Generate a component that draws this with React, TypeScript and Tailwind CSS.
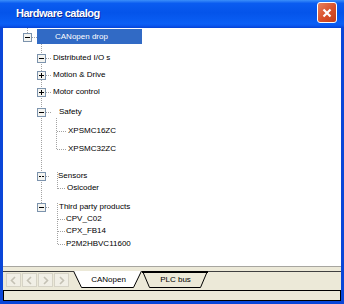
import React from 'react';

const rows = [
  { label: 'Distributed I/O s', cls: 'mt-[8px] ml-[50px]' },
  { label: 'Motion & Drive', cls: 'mt-[5px] ml-[50px]' },
  { label: 'Motor control', cls: 'mt-[5px] ml-[50px]' },
  { label: 'Safety', cls: 'mt-[8px] ml-[56px]' },
  { label: 'XPSMC16ZC', cls: 'mt-[7px] ml-[65px]' },
  { label: 'XPSMC32ZC', cls: 'mt-[6px] ml-[65px]' },
  { label: 'Sensors', cls: 'mt-[15px] ml-[55px]' },
  { label: 'Osicoder', cls: 'mt-0 ml-[64px]' },
  { label: 'Third party products', cls: 'mt-[7px] ml-[56px]' },
  { label: 'CPV_C02', cls: 'mt-0 ml-[63px]' },
  { label: 'CPX_FB14', cls: 'mt-0 ml-[63px]' },
  { label: 'P2M2HBVC11600', cls: 'mt-[1px] ml-[63px]' },
];

type BoxKind = 'minus' | 'plus' | 'dash';

function Box({ x, y, kind }: { x: number; y: number; kind: BoxKind }) {
  return (
    <g>
      <rect x={x + 0.5} y={y + 0.5} width={8} height={8} fill="#f4f4f0" stroke="#7c93ad" />
      {kind === 'dash' ? (
        <>
          <line x1={x + 2} y1={y + 4.5} x2={x + 4} y2={y + 4.5} stroke="#000" />
          <line x1={x + 5} y1={y + 4.5} x2={x + 7} y2={y + 4.5} stroke="#000" />
        </>
      ) : (
        <line x1={x + 2} y1={y + 4.5} x2={x + 7} y2={y + 4.5} stroke="#000" />
      )}
      {kind === 'plus' && <line x1={x + 4.5} y1={y + 2} x2={x + 4.5} y2={y + 7} stroke="#000" />}
    </g>
  );
}

function Connectors() {
  const dot = { stroke: '#a3a3a3', strokeWidth: 1, strokeDasharray: '1 1' };
  const h = (y: number, x1: number, x2: number) => <line x1={x1} y1={y + 0.5} x2={x2} y2={y + 0.5} {...dot} />;
  const v = (x: number, y1: number, y2: number) => <line x1={x + 0.5} y1={y1} x2={x + 0.5} y2={y2} {...dot} />;
  return (
    <svg className="absolute inset-0 pointer-events-none" width={344} height={304}>
      {v(27, 28, 33)}
      {h(37, 32, 37)}
      {v(41, 44, 204)}
      {h(58, 46, 52)}
      {h(75, 46, 52)}
      {h(92, 46, 52)}
      {h(112, 46, 51)}
      {h(176, 46, 49)}
      {h(207, 46, 50)}
      {v(56, 118, 150)}
      {h(131, 57, 67)}
      {h(149, 57, 67)}
      {v(57, 172, 189)}
      {h(188, 58, 66)}
      {v(57, 203, 245)}
      {h(219, 58, 65)}
      {h(231, 58, 65)}
      {h(244, 58, 65)}
      <Box x={23} y={33} kind="minus" />
      <Box x={37} y={54} kind="minus" />
      <Box x={37} y={71} kind="plus" />
      <Box x={37} y={88} kind="plus" />
      <Box x={37} y={108} kind="minus" />
      <Box x={37} y={172} kind="dash" />
      <Box x={37} y={203} kind="minus" />
    </svg>
  );
}

function NavButton({ dir }: { dir: 'left' | 'right' }) {
  return (
    <div className="w-[15px] h-[14px] border border-[#d6d3c6] bg-[#f1efe6] flex items-center justify-center">
      <svg width="7" height="9" viewBox="0 0 7 9">
        {dir === 'left' ? (
          <polyline points="5,1 1.5,4.5 5,8" fill="none" stroke="#c4c1b4" strokeWidth="1.6" />
        ) : (
          <polyline points="2,1 5.5,4.5 2,8" fill="none" stroke="#c4c1b4" strokeWidth="1.6" />
        )}
      </svg>
    </div>
  );
}

function Tab({ label, active }: { label: string; active?: boolean }) {
  const w = active ? 69 : 66;
  const pts = active ? '0.5,0 68.5,0 60.5,16.5 8.5,16.5' : '0.5,0 65.5,0 58.5,16.5 7.5,16.5';
  return (
    <div className={`relative h-[17px] flex items-center justify-center ${active ? 'w-[69px]' : 'w-[66px]'}`}>
      <svg className="absolute inset-0" width={w} height={17}>
        <polygon points={pts} fill={active ? '#ffffff' : '#ece9d8'} stroke="none" />
        <polyline points={active ? '0.5,0 8.5,16.5 60.5,16.5 68.5,0' : '0.5,0 7.5,16.5 58.5,16.5 65.5,0'} fill="none" stroke="#000" />
        {!active && <line x1={0} y1={1} x2={66} y2={1} stroke="#000" strokeWidth={2} />}
      </svg>
      <span className={`relative text-[8px] leading-none text-black ${active ? 'ml-[2px]' : 'ml-[1px] mt-[1px]'}`}>{label}</span>
    </div>
  );
}

export default function App() {
  return (
    <div className="relative w-[344px] h-[304px] flex flex-col bg-[#0a46d8] font-['Liberation_Sans',Arial,sans-serif]">
      <div className="h-[28px] flex items-center justify-between pl-[16px] pr-[7px] bg-[linear-gradient(to_bottom,#3b8ffa_0%,#0a5cf0_12%,#0454ea_45%,#0b5ff5_85%,#0a56ee_92%,#0541d4_100%)]">
        <span className="text-white text-[11px] font-bold tracking-[-0.5px] [text-shadow:1px_1px_0_#0b2a96] -mt-[1px]">Hardware catalog</span>
        <div className="w-[20px] h-[21px] -mt-[3px] rounded-[3px] border border-white bg-[linear-gradient(135deg,#e8805e,#d8502a_55%,#c23e1b)] flex items-center justify-center">
          <svg width="10" height="10" viewBox="0 0 10 10">
            <path d="M1.5 1.5 L8.5 8.5 M8.5 1.5 L1.5 8.5" stroke="#fff" strokeWidth="2.2" />
          </svg>
        </div>
      </div>
      <div className="flex-1 mx-[3px] mb-[3px] flex flex-col bg-[#ece9d8]">
        <div className="h-[238px] bg-white flex flex-col text-[8px] text-black">
          <div className="mt-[1px] ml-[34px] w-[105px] h-[15px] bg-[#316ac5] text-white flex items-center pl-[18px]">
            CANopen drop
          </div>
          {rows.map((r) => (
            <div key={r.label} className={`h-[12px] leading-[12px] whitespace-nowrap ${r.cls}`}>
              {r.label}
            </div>
          ))}
        </div>
        <div className="h-[1px] bg-[#a7a6a0]" />
        <div className="h-[23px] pt-[4px] flex items-start">
          <div className="w-[70px] h-[17px] border-t border-[#404040] flex gap-[1px] pl-[3px] pt-[1px]">
            <NavButton dir="left" />
            <NavButton dir="left" />
            <NavButton dir="right" />
            <NavButton dir="right" />
          </div>
          <Tab label="CANopen" active />
          <Tab label="PLC bus" />
          <div className="flex-1 border-t border-[#404040]" />
        </div>
        <div className="h-[11px] border border-black bg-[#ece9d8]" />
      </div>
      <Connectors />
    </div>
  );
}
